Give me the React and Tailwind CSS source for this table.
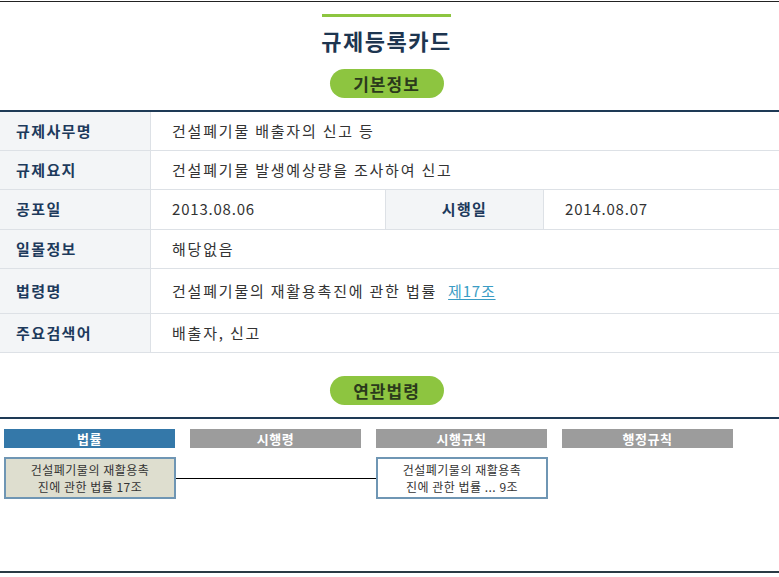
import React from 'react';

const font = { fontFamily: '"Noto Sans CJK KR", "Noto Sans", sans-serif' };

const Pill = ({ children }) => (
  <div className="w-[114px] h-[29px] rounded-full bg-[#8dc540] flex items-center justify-center text-[17px] font-semibold text-[#2b3a1c] tracking-[1px]">
    {children}
  </div>
);

const Label = ({ children, className = '' }) => (
  <div className={`bg-[#f3f5f7] flex items-center pl-[16px] text-[15px] font-bold text-[#1d3a5c] tracking-[1.4px] ${className}`}>
    {children}
  </div>
);

const Value = ({ children, className = '' }) => (
  <div className={`flex items-center pl-[21px] text-[15px] text-[#333] ${className}`}>
    {children}
  </div>
);

const rows = [
  { label: '규제사무명', value: '건설폐기물 배출자의 신고 등', h: 'h-[39px]' },
  { label: '규제요지', value: '건설폐기물 발생예상량을 조사하여 신고', h: 'h-[39px]' },
];

const heads = [
  { name: '법률', color: 'bg-[#3478a9]' },
  { name: '시행령', color: 'bg-[#9c9c9c]' },
  { name: '시행규칙', color: 'bg-[#9c9c9c]' },
  { name: '행정규칙', color: 'bg-[#9c9c9c]' },
];

export default function App() {
  return (
    <div className="w-[779px] h-[577px] bg-white overflow-hidden flex flex-col" style={font}>
      <div className="mt-px h-px bg-[#222]" />

      {/* title */}
      <div className="w-[773px] flex flex-col items-center">
        <div className="mt-[12px] w-[129px] h-[3px] bg-[#8dc540]" />
        <div className="mt-[8px] text-[22px] font-bold text-[#1d3550] leading-[30px] tracking-[1.5px]">규제등록카드</div>
        <div className="mt-[14px]"><Pill>기본정보</Pill></div>
      </div>

      {/* basic info table */}
      <div className="mt-[12px] border-t-2 border-[#1e3a56]">
        {rows.map((r) => (
          <div key={r.label} className={`flex ${r.h} border-b border-[#dde1e6]`}>
            <Label className="w-[151px] border-r border-[#dde1e6]">{r.label}</Label>
            <Value className="flex-1 tracking-[1.8px]">{r.value}</Value>
          </div>
        ))}
        <div className="flex h-[40px] border-b border-[#dde1e6]">
          <Label className="w-[151px] border-r border-[#dde1e6]">공포일</Label>
          <Value className="w-[235px] border-r border-[#dde1e6] tracking-[0.8px]">2013.08.06</Value>
          <div className="w-[158px] bg-[#f3f5f7] border-r border-[#dde1e6] flex items-center justify-center text-[15px] font-bold text-[#1d3a5c] tracking-[1.4px]">시행일</div>
          <Value className="flex-1 tracking-[0.8px]">2014.08.07</Value>
        </div>
        <div className="flex h-[39px] border-b border-[#dde1e6]">
          <Label className="w-[151px] border-r border-[#dde1e6]">일몰정보</Label>
          <Value className="flex-1 tracking-[1.8px]">해당없음</Value>
        </div>
        <div className="flex h-[45px] border-b border-[#dde1e6]">
          <Label className="w-[151px] border-r border-[#dde1e6]">법령명</Label>
          <Value className="flex-1 tracking-[1.8px]">
            건설폐기물의 재활용촉진에 관한 법률
            <span className="ml-[11px] text-[#3a9cc4] underline underline-offset-2 tracking-[0.8px]">제17조</span>
          </Value>
        </div>
        <div className="flex h-[39px] border-b border-[#dde1e6]">
          <Label className="w-[151px] border-r border-[#dde1e6]">주요검색어</Label>
          <Value className="flex-1 tracking-[1.8px]">배출자, 신고</Value>
        </div>
      </div>

      {/* related laws */}
      <div className="w-[773px] flex justify-center mt-[23px]">
        <Pill>연관법령</Pill>
      </div>
      <div className="mt-[12px] h-[2px] bg-[#1e3a56]" />

      <div className="mt-[10px] pl-[4px] flex gap-[15px]">
        {heads.map((h) => (
          <div key={h.name} className={`w-[171px] h-[19px] ${h.color} flex items-center justify-center text-[13px] font-bold text-white tracking-[0.5px]`}>
            {h.name}
          </div>
        ))}
      </div>

      <div className="mt-[9px] pl-[4px] flex items-center">
        <div className="w-[172px] h-[42px] bg-[#dedecf] border-2 border-[#6f96b4] flex items-center justify-center text-center text-[12px] leading-[17px] text-[#333] tracking-[0.5px]">
          건설폐기물의 재활용촉<br />진에 관한 법률 17조
        </div>
        <div className="w-[200px] h-px bg-black" />
        <div className="w-[172px] h-[42px] bg-white border-2 border-[#6f96b4] flex items-center justify-center text-center text-[12px] leading-[17px] text-[#333] tracking-[0.5px]">
          건설폐기물의 재활용촉<br />진에 관한 법률 ... 9조
        </div>
      </div>

      <div className="mt-[72px] h-[2px] bg-[#2a3a44]" />
    </div>
  );
}
